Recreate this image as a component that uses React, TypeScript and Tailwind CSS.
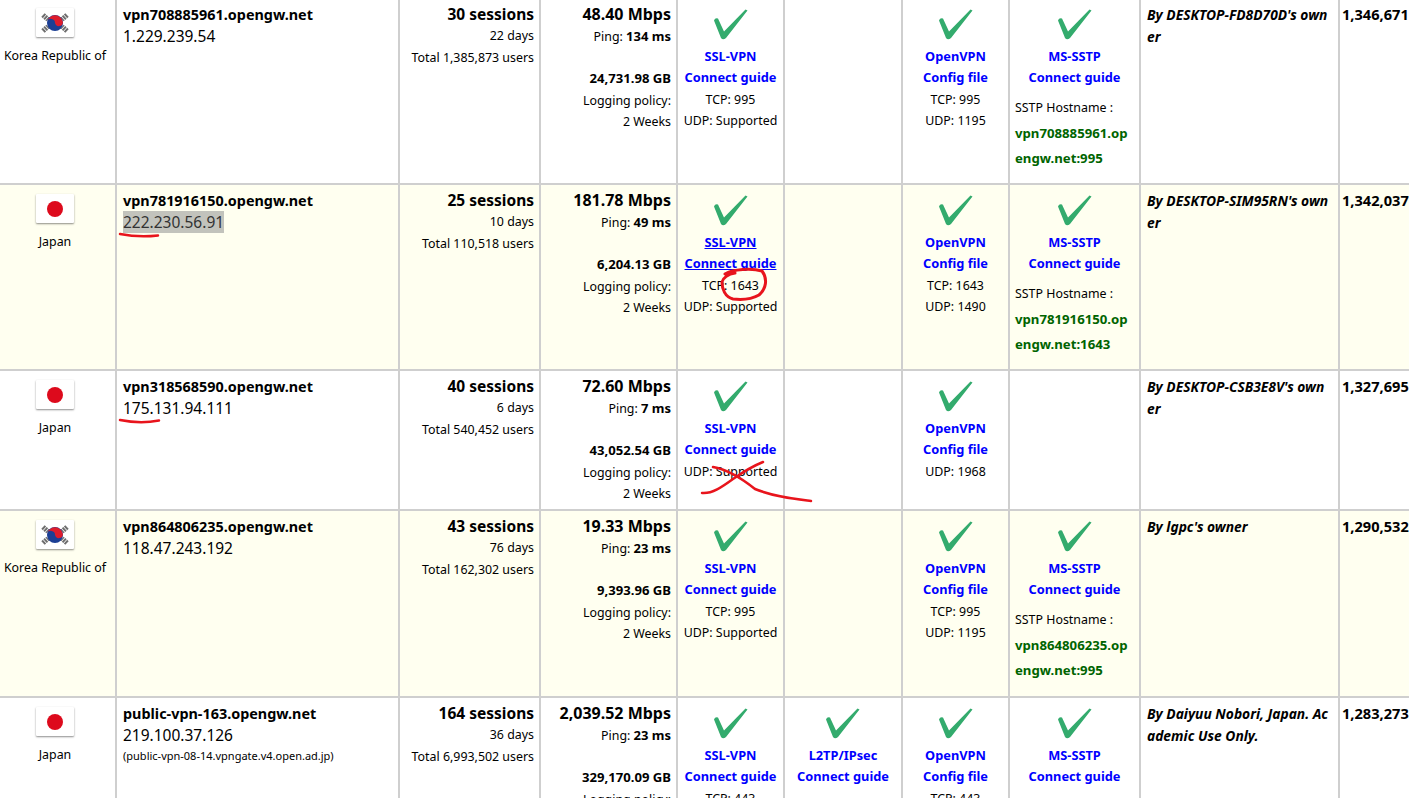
import React from 'react';

type Sstp = { host: string; tail: string };
type Row = {
  flag: 'kr' | 'jp';
  country: string;
  host: string;
  ip: string;
  selected?: boolean;
  sub?: string;
  sessions: string;
  days: string;
  total: string;
  speed: string;
  ping: string;
  traffic: string;
  ssl: string[];
  underlined?: boolean;
  l2tp?: boolean;
  ovpn: string[];
  sstp?: Sstp;
  owner: string[];
  score: string;
  height: string;
};

const rows: Row[] = [
  { flag: 'kr', country: 'Korea Republic of', host: 'vpn708885961.opengw.net', ip: '1.229.239.54', sessions: '30 sessions', days: '22 days', total: 'Total 1,385,873 users', speed: '48.40 Mbps', ping: '134 ms', traffic: '24,731.98 GB', ssl: ['TCP: 995', 'UDP: Supported'], ovpn: ['TCP: 995', 'UDP: 1195'], sstp: { host: 'vpn708885961.op', tail: 'engw.net:995' }, owner: ["By DESKTOP-FD8D70D's own", 'er'], score: '1,346,671', height: 'h-[186px]' },
  { flag: 'jp', country: 'Japan', host: 'vpn781916150.opengw.net', ip: '222.230.56.91', selected: true, sessions: '25 sessions', days: '10 days', total: 'Total 110,518 users', speed: '181.78 Mbps', ping: '49 ms', traffic: '6,204.13 GB', ssl: ['TCP: 1643', 'UDP: Supported'], underlined: true, ovpn: ['TCP: 1643', 'UDP: 1490'], sstp: { host: 'vpn781916150.op', tail: 'engw.net:1643' }, owner: ["By DESKTOP-SIM95RN's own", 'er'], score: '1,342,037', height: 'h-[186px]' },
  { flag: 'jp', country: 'Japan', host: 'vpn318568590.opengw.net', ip: '175.131.94.111', sessions: '40 sessions', days: '6 days', total: 'Total 540,452 users', speed: '72.60 Mbps', ping: '7 ms', traffic: '43,052.54 GB', ssl: ['UDP: Supported'], ovpn: ['UDP: 1968'], owner: ["By DESKTOP-CSB3E8V's own", 'er'], score: '1,327,695', height: 'h-[140px]' },
  { flag: 'kr', country: 'Korea Republic of', host: 'vpn864806235.opengw.net', ip: '118.47.243.192', sessions: '43 sessions', days: '76 days', total: 'Total 162,302 users', speed: '19.33 Mbps', ping: '23 ms', traffic: '9,393.96 GB', ssl: ['TCP: 995', 'UDP: Supported'], ovpn: ['TCP: 995', 'UDP: 1195'], sstp: { host: 'vpn864806235.op', tail: 'engw.net:995' }, owner: ["By lgpc's owner"], score: '1,290,532', height: 'h-[187px]' },
  { flag: 'jp', country: 'Japan', host: 'public-vpn-163.opengw.net', ip: '219.100.37.126', sub: '(public-vpn-08-14.vpngate.v4.open.ad.jp)', sessions: '164 sessions', days: '36 days', total: 'Total 6,993,502 users', speed: '2,039.52 Mbps', ping: '23 ms', traffic: '329,170.09 GB', ssl: ['TCP: 443'], l2tp: true, ovpn: ['TCP: 443'], sstp: { host: '', tail: '' }, owner: ['By Daiyuu Nobori, Japan. Ac', 'ademic Use Only.'], score: '1,283,273', height: 'h-[120px]' },
];

const Check = () => (
  <svg width="36" height="31" viewBox="0 0 36 31" className="mx-auto block blur-[0.4px]">
    <path d="M1 11.5 Q2 8.5 5 9.5 L11 22.5 L32.5 0.5 L34.5 1.5 L13 29 Q10 31.5 8 29 Z" fill="#33ab6d" />
  </svg>
);

const Flag = ({ kind }: { kind: 'kr' | 'jp' }) => (
  <div className="mx-auto w-[38px] h-[29px] bg-white rounded-[1px] shadow-[0_1px_2px_rgba(0,0,0,0.45)] flex items-center justify-center">
    {kind === 'jp' ? (
      <div className="w-[16px] h-[16px] rounded-full bg-[#dd0a1c]" />
    ) : (
      <svg width="34" height="26" viewBox="0 0 34 26" className="blur-[0.3px]">
        <g stroke="#6e6e6e" strokeWidth="5" strokeDasharray="2 0.7">
          <path d="M5 5 L10 9.5" />
          <path d="M29 5 L24 9.5" />
          <path d="M5 21 L10 16.5" />
          <path d="M29 21 L24 16.5" />
        </g>
        <circle cx="17" cy="13" r="8" fill="#1c3f94" />
        <path d="M9.1 12 A8 8 0 0 1 24.9 12 A4 4 0 0 1 17 13 A4 4 0 0 0 9.1 12 Z" fill="#dd1c2c" />
      </svg>
    )}
  </div>
);

const Links = ({ a, b = 'Connect guide', u }: { a: string; b?: string; u?: boolean }) => (
  <>
    <div className={`h-[21px] leading-[21px] text-[12.8px] font-bold text-[#0000ff] mt-[6px] ${u ? 'underline' : ''}`}>{a}</div>
    <div className={`h-[21.5px] leading-[21.5px] text-[12.8px] font-bold text-[#0000ff] ${u ? 'underline' : ''}`}>{b}</div>
  </>
);

const Proto = ({ name, guide, lines, u }: { name: string; guide?: string; lines?: string[]; u?: boolean }) => (
  <div className="pt-[10px] text-center whitespace-nowrap">
    <Check />
    <Links a={name} b={guide} u={u} />
    {lines?.map((l) => (
      <div key={l} className="h-[21.5px] leading-[21.5px]">{l}</div>
    ))}
  </div>
);

const Cell = ({ children, className = '' }: { children?: React.ReactNode; className?: string }) => (
  <div className={`border-r-2 border-b-2 border-[#cfcfcf] overflow-hidden ${className}`}>{children}</div>
);

// hand drawn red marks on top of the table
const Annotations = () => (
  <svg className="absolute inset-0 pointer-events-none" width="1409" height="798" fill="none" stroke="#e8141c" strokeWidth="2.5" strokeLinecap="round" strokeLinejoin="round">
    <path d="M120 234 C130 236 145 237 158 235.5" />
    <path d="M120 420 C130 422 146 423 159 420.5" />
    <path d="M725 274 C733 269 752 268 762 271 C768 279 766 289 759 295 C752 299 742 300 733 299 C725 297 722 289 722 282 C723 278 728 274 735 273" strokeWidth="3" />
    <path d="M702 493 C712 494 722 487 733 479 C743 472 753 466 763 462" />
    <path d="M713 467 C725 469 740 477 755 489 C775 497 795 499 811 501" />
  </svg>
);

export default function App() {
  return (
    <div className="relative w-[1409px] h-[798px] overflow-hidden bg-white text-black text-[12.4px] font-['Noto_Sans',sans-serif]">
      <div className="-mt-px">
        {rows.map((r, i) => (
          <div key={r.host} className={`grid grid-cols-[117px_283px_141px_137px_107px_118px_107px_131px_199px_69px] ${r.height} ${i % 2 === 1 ? 'bg-[#fffff0]' : 'bg-white'}`}>
            <Cell className="pt-[9px] pr-[5px] text-center whitespace-nowrap">
              <Flag kind={r.flag} />
              <div className="mt-[8px] leading-[22px]">{r.country}</div>
            </Cell>
            <Cell className="pt-[5px] pl-[6px]">
              <div className="text-[14.4px] font-bold leading-[21px]">{r.host}</div>
              <div className="text-[15.5px] leading-[22px]">
                <span className={r.selected ? 'bg-[#c2c3bc] text-[#333]' : ''}>{r.ip}</span>
              </div>
              {r.sub && <div className="text-[11px] leading-[20px]">{r.sub}</div>}
            </Cell>
            <Cell className="pt-[5px] pr-[5px] text-right whitespace-nowrap">
              <div className="text-[15.5px] font-bold leading-[21px]">{r.sessions}</div>
              <div className="leading-[22px]">{r.days}</div>
              <div className="leading-[22px]">{r.total}</div>
            </Cell>
            <Cell className="pt-[5px] pr-[5px] text-right whitespace-nowrap">
              <div className="text-[16px] font-bold leading-[21px]">{r.speed}</div>
              <div className="leading-[22px]">Ping: <b className="text-[13px]">{r.ping}</b></div>
              <div className="mt-[20px] text-[13.1px] font-bold leading-[21.5px]">{r.traffic}</div>
              <div className="leading-[21.5px]">Logging policy:</div>
              <div className="leading-[21.5px]">2 Weeks</div>
            </Cell>
            <Cell><Proto name="SSL-VPN" lines={r.ssl} u={r.underlined} /></Cell>
            <Cell>{r.l2tp && <Proto name="L2TP/IPsec" />}</Cell>
            <Cell><Proto name="OpenVPN" guide="Config file" lines={r.ovpn} /></Cell>
            <Cell>
              {r.sstp && (
                <div className="pt-[10px] whitespace-nowrap">
                  <Check />
                  <div className="text-center"><Links a="MS-SSTP" /></div>
                  <div className="pl-[5px] mt-[6px] leading-[26px]">SSTP Hostname :</div>
                  <div className="pl-[5px] text-[13.2px] font-bold text-[#006400] leading-[25.5px]">{r.sstp.host}</div>
                  <div className="pl-[5px] text-[13.2px] font-bold text-[#006400] leading-[25.5px]">{r.sstp.tail}</div>
                </div>
              )}
            </Cell>
            <Cell className="pt-[5px] pl-[6px] text-[13.8px] font-bold italic whitespace-nowrap">
              {r.owner.map((o) => (
                <div key={o} className="leading-[21.5px]">{o}</div>
              ))}
            </Cell>
            <div className="pt-[5px] pl-[2px] border-b-2 border-[#cfcfcf] text-[14.6px] font-bold leading-[21px] whitespace-nowrap overflow-hidden">{r.score}</div>
          </div>
        ))}
      </div>
      <Annotations />
    </div>
  );
}
